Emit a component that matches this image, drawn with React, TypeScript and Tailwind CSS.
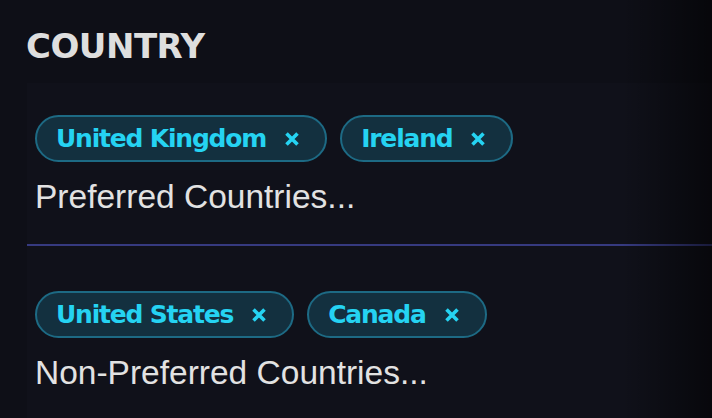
import { useState } from 'react'

interface Country {
  id: string
  name: string
}

const tagFont = { fontFamily: '"DejaVu Sans", Verdana, sans-serif' }

function CloseIcon() {
  return (
    <svg width="14" height="14" viewBox="0 0 14 14" fill="none" stroke="currentColor" strokeWidth="3.6">
      <path d="M1.5 1.5l11 11M12.5 1.5l-11 11" />
    </svg>
  )
}

function CountryTag({ country, onRemove }: { country: Country; onRemove: (id: string) => void }) {
  return (
    <span className="inline-flex h-[47px] items-center rounded-full border-2 border-[#1d6a84] bg-[#13303f] pl-[19px] pr-[26px] text-[25px] font-bold leading-none tracking-[-1.2px] text-[#25d3f2]">
      <span>{country.name}</span>
      <button type="button" onClick={() => onRemove(country.id)} className="ml-[19px] flex items-center text-[#25d3f2]">
        <CloseIcon />
      </button>
    </span>
  )
}

function CountryPicker({ initial, placeholder }: { initial: Country[]; placeholder: string }) {
  const [countries, setCountries] = useState(initial)

  return (
    <div className="pl-[8px]">
      <div className="flex flex-wrap gap-[13px]" style={tagFont}>
        {countries.map((c) => (
          <CountryTag key={c.id} country={c} onRemove={(id) => setCountries(countries.filter((x) => x.id !== id))} />
        ))}
      </div>
      <input
        placeholder={placeholder}
        className="mt-[18px] block h-[34px] w-full bg-transparent text-[33.5px] leading-none text-[#e2e2e2] outline-none placeholder:text-[#e2e2e2]"
        style={{ fontFamily: '"Liberation Sans", Arial, sans-serif' }}
      />
    </div>
  )
}

export default function App() {
  return (
    <div className="relative h-[418px] w-full overflow-hidden bg-[#0e0f17] pt-[29px]">
      <h2
        className="pl-[26px] text-[34px] font-bold uppercase leading-none tracking-[-0.5px] text-[#dedede]"
        style={tagFont}
      >
        Country
      </h2>
      <div className="ml-[27px] mt-[20px] h-full bg-[#10111a]">
        <div className="pt-[32px] pb-[30px]">
          <CountryPicker
            initial={[
              { id: 'gb', name: 'United Kingdom' },
              { id: 'ie', name: 'Ireland' },
            ]}
            placeholder="Preferred Countries..."
          />
        </div>
        <div className="h-[2px] bg-[#363a80]" />
        <div className="pt-[45px]">
          <CountryPicker
            initial={[
              { id: 'us', name: 'United States' },
              { id: 'ca', name: 'Canada' },
            ]}
            placeholder="Non-Preferred Countries..."
          />
        </div>
      </div>
      <div className="pointer-events-none absolute right-0 top-0 h-full w-[90px] bg-gradient-to-r from-transparent to-black/55" />
    </div>
  )
}
